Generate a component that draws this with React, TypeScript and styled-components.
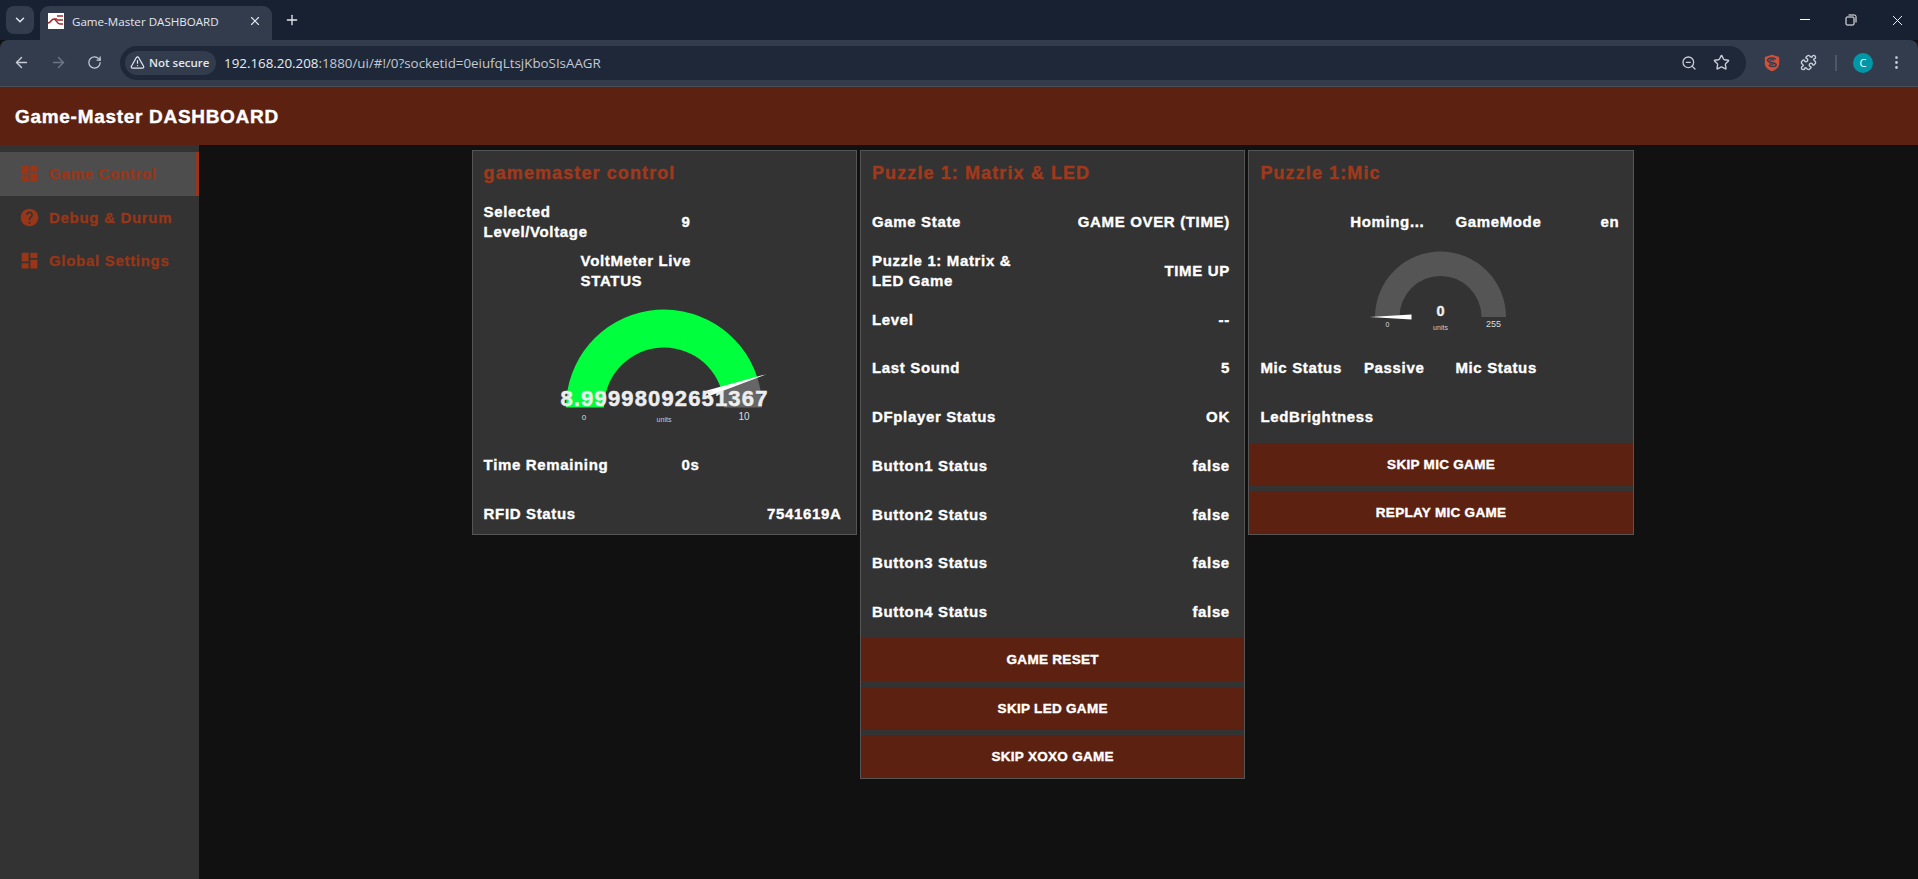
import React from 'react';
import styled, { createGlobalStyle } from 'styled-components';
import { ArrowLeft, ArrowRight, ChevronDown, EllipsisVertical, Plus, Puzzle, RotateCw, Star, TriangleAlert, X, ZoomOut } from 'lucide-react';

const GlobalStyle = createGlobalStyle`
  html, body {
    margin: 0;
    padding: 0;
    background: #111111;
    overflow: hidden;
  }
`;

const Page = styled.div`
  width: 1918px;
  height: 879px;
  display: flex;
  flex-direction: column;
  overflow: hidden;
  font-family: 'Liberation Sans', Arial, sans-serif;
`;

/* browser chrome */
const TabStrip = styled.div`
  height: 40px;
  flex: none;
  background: #182132;
  display: flex;
  align-items: flex-end;
  padding-left: 6px;
  color: #e3e7ee;
  font-family: 'Open Sans', 'Noto Sans', sans-serif;
`;

const TabSearch = styled.div`
  width: 28px;
  height: 28px;
  margin-bottom: 6px;
  border-radius: 8px;
  background: #323c4d;
  display: flex;
  align-items: center;
  justify-content: center;
`;

const Tab = styled.div`
  width: 232px;
  height: 34px;
  margin-left: 6px;
  padding: 0 10px 4px 8px;
  box-sizing: border-box;
  border-radius: 9px 9px 0 0;
  background: #323c4d;
  display: flex;
  align-items: center;
  font-size: 11.6px;
`;

const TabTitle = styled.span`
  margin-left: 8px;
  flex: 1;
  white-space: nowrap;
`;

const NewTab = styled.div`
  margin: 0 0 12px 12px;
  display: flex;
`;

const WindowControls = styled.div`
  margin-left: auto;
  align-self: stretch;
  display: flex;
  align-items: center;
  gap: 30px;
  padding-right: 12px;
`;

const Toolbar = styled.div`
  height: 47px;
  flex: none;
  box-sizing: border-box;
  background: #323c4d;
  border-radius: 8px 8px 0 0;
  border-bottom: 1px solid #4a4f57;
  display: flex;
  align-items: center;
  color: #c6ccd6;
  font-family: 'Open Sans', 'Noto Sans', sans-serif;
  padding-bottom: 1px;
`;

const NavButtons = styled.div`
  width: 120px;
  flex: none;
  padding-left: 13px;
  box-sizing: border-box;
  display: flex;
  gap: 20px;
`;

const Omnibox = styled.div`
  width: 1626px;
  height: 34px;
  border-radius: 17px;
  background: #1f2838;
  display: flex;
  align-items: center;
  padding: 0 16px 0 5px;
  box-sizing: border-box;
`;

const Chip = styled.div`
  width: 91px;
  height: 24px;
  flex: none;
  border-radius: 12px;
  background: #323c4d;
  display: flex;
  align-items: center;
  gap: 4px;
  padding-left: 5px;
  box-sizing: border-box;
  font-size: 11.5px;
  font-weight: 600;
  color: #e3e7ee;
  white-space: nowrap;
`;

const Url = styled.div`
  margin-left: 8px;
  font-size: 13.35px;
  color: #c3c9d3;
  white-space: nowrap;
  b {
    font-weight: 400;
    color: #e8ebf0;
  }
`;

const OmniIcons = styled.div`
  margin-left: auto;
  display: flex;
  align-items: center;
  gap: 16px;
`;

const ToolIcons = styled.div`
  flex: 1;
  display: flex;
  align-items: center;
  padding-left: 18px;
`;

const Separator = styled.div`
  width: 2px;
  height: 16px;
  margin: 0 16px 0 18px;
  background: #4d5665;
`;

const Avatar = styled.div`
  width: 20px;
  height: 20px;
  border-radius: 50%;
  background: #0097a7;
  color: #ffffff;
  font-size: 11px;
  display: flex;
  align-items: center;
  justify-content: center;
`;

/* dashboard */
const Header = styled.header`
  height: 58px;
  flex: none;
  background: #5c2110;
  color: #ffffff;
  display: flex;
  align-items: center;
  padding: 2px 0 0 15px;
  font-size: 19px;
  font-weight: 700;
  letter-spacing: 0.7px;
  -webkit-text-stroke: 0.4px #ffffff;
  box-sizing: border-box;
`;

const Body = styled.div`
  flex: 1;
  display: flex;
  min-height: 0;
`;

const Sidebar = styled.nav`
  width: 199px;
  flex: none;
  background: #333333;
  padding-top: 7px;
  box-sizing: border-box;
`;

const NavItem = styled.div<{ $active?: boolean }>`
  height: 43.5px;
  display: flex;
  align-items: center;
  box-sizing: border-box;
  padding-left: 19px;
  gap: 9px;
  color: #993618;
  background: ${p => (p.$active ? '#4d4d4d' : 'transparent')};
  border-right: ${p => (p.$active ? '3px solid #993618' : '0')};
  font-size: 15px;
  font-weight: 700;
  letter-spacing: 0.7px;
  -webkit-text-stroke: 0.3px #993618;
`;

const Main = styled.main`
  flex: 1;
  background: #111111;
  display: flex;
  align-items: flex-start;
  gap: 3px;
  padding: 5px 0 0 272.6px;
`;

const Card = styled.section`
  width: 385.4px;
  flex: none;
  box-sizing: border-box;
  background: #333333;
  border: 1px solid #555555;
  display: flex;
  flex-direction: column;
`;

const CardTitle = styled.h2`
  margin: 0;
  height: 51px;
  padding: 12px 0 0 11px;
  box-sizing: border-box;
  color: #a0391c;
  font-size: 18px;
  font-weight: 700;
  letter-spacing: 1.1px;
  -webkit-text-stroke: 0.4px #a0391c;
`;

const Rows = styled.div`
  display: flex;
  flex-direction: column;
  gap: 8.75px;
`;

const Row = styled.div<{ $split?: boolean }>`
  height: 40px;
  margin: 0 14.5px 0 11px;
  display: flex;
  align-items: center;
  justify-content: ${p => (p.$split ? 'flex-start' : 'space-between')};
  color: #ffffff;
  font-size: 15px;
  font-weight: 700;
  line-height: 20px;
  letter-spacing: 0.65px;
  -webkit-text-stroke: 0.35px #ffffff;
`;

const Label = styled.span<{ $width?: number }>`
  width: ${p => (p.$width ? `${p.$width}px` : 'auto')};
  flex: none;
`;

const HalfCell = styled.div<{ $offset?: number; $end?: boolean }>`
  width: 164px;
  flex: none;
  margin-left: ${p => p.$offset || 0}px;
  display: flex;
  justify-content: ${p => (p.$end ? 'flex-end' : 'space-between')};
`;

const GaugeCaption = styled.div`
  width: 150px;
  margin-left: 97px;
`;

const GaugeBox = styled.div<{ $height: number }>`
  height: ${p => p.$height}px;
  svg {
    display: block;
  }
`;

const Buttons = styled.div`
  display: flex;
  flex-direction: column;
  gap: 5.5px;
  margin-top: 6px;
`;

const ActionButton = styled.button`
  height: 43px;
  border: 0;
  padding: 0;
  background: #5c2110;
  color: #ffffff;
  font-family: 'Liberation Sans', Arial, sans-serif;
  font-size: 13.5px;
  font-weight: 700;
  letter-spacing: 0.3px;
  -webkit-text-stroke: 0.4px #ffffff;
`;

const DashboardIcon = () => (
  <svg width="21" height="21" viewBox="0 0 24 24" fill="#993618">
    <path d="M3 13h8V3H3v10zm0 8h8v-6H3v6zm10 0h8V11h-8v10zm0-18v6h8V3h-8z" />
  </svg>
);

const HelpIcon = () => (
  <svg width="21" height="21" viewBox="0 0 24 24" fill="#993618">
    <path d="M12 2C6.48 2 2 6.48 2 12s4.48 10 10 10 10-4.48 10-10S17.52 2 12 2zm1 17h-2v-2h2v2zm2.07-7.75l-.9.92C13.45 12.9 13 13.5 13 15h-2v-.5c0-1.1.45-2.1 1.17-2.83l1.24-1.26c.37-.36.59-.86.59-1.41 0-1.1-.9-2-2-2s-2 .9-2 2H8c0-2.21 1.79-4 4-4s4 1.79 4 4c0 .88-.36 1.68-.93 2.25z" />
  </svg>
);

const Favicon = () => (
  <svg width="16" height="16" viewBox="0 0 16 16">
    <rect width="16" height="16" fill="#ffffff" />
    <path d="M0 10c3 0 3-4 6-4h3M6 6c2 0 3 5 6 5M9 3h6M12 11h3M9 7h6" stroke="#a8272b" strokeWidth="1.6" fill="none" />
  </svg>
);

const ShieldIcon = () => (
  <svg width="16" height="18" viewBox="0 0 16 18" fill="none">
    <path d="M8 .8 15.2 3v6.2c0 4-3.4 6.6-7.2 8-3.8-1.4-7.2-4-7.2-8V3z" fill="#d0513a" />
    <path d="M11.8 5.2C9.8 3.4 4 3.4 3.6 6.4c-.3 2.6 8.4 1.6 8.6 4.4.1 2-4.6 2.6-7.4.4" stroke="#323c4d" strokeWidth="1.5" />
    <path d="M5.6 6.6c1.4-1 3.4-1 4.6-.2M5.4 9.6c1.6.7 3.4.7 4.6.1" stroke="#323c4d" strokeWidth="1.2" />
  </svg>
);

const MinimizeIcon = () => (
  <svg width="16" height="16" viewBox="0 0 16 16">
    <path d="M3 7.5h10" stroke="#ffffff" strokeWidth="1" />
  </svg>
);

const RestoreIcon = () => (
  <svg width="16" height="16" viewBox="0 0 16 16" fill="none" stroke="#ffffff">
    <rect x="3" y="5" width="8" height="8" rx="1" />
    <path d="M5.5 3h6a1.5 1.5 0 0 1 1.5 1.5v6" />
  </svg>
);

// half-donut gauge drawn the way node-red dashboard does it
const arcPath = (cx: number, cy: number, outer: number, inner: number, from: number, to: number) => {
  const pt = (r: number, a: number) => {
    const rad = Math.PI - (a * Math.PI) / 180;
    return `${(cx + r * Math.cos(rad)).toFixed(2)} ${(cy - r * Math.sin(rad)).toFixed(2)}`;
  };
  return `M${pt(outer, from)} A${outer} ${outer} 0 0 1 ${pt(outer, to)} L${pt(inner, to)} A${inner} ${inner} 0 0 0 ${pt(inner, from)} Z`;
};

const needlePath = (cx: number, cy: number, length: number, start: number, base: number, angle: number) => {
  const rad = Math.PI - (angle * Math.PI) / 180;
  const dx = Math.cos(rad);
  const dy = -Math.sin(rad);
  const nx = -dy;
  const ny = dx;
  const sx = cx + start * dx;
  const sy = cy + start * dy;
  return `M${sx + nx * base} ${sy + ny * base} L${cx + length * dx} ${cy + length * dy} L${sx - nx * base} ${sy - ny * base} Z`;
};

const gaugeFont = "'Liberation Sans', Arial, sans-serif";

const VoltGauge = () => (
  <svg width="384" height="137" viewBox="0 0 384 137">
    <path d={arcPath(191, 107.5, 98, 60, 0, 162)} fill="#00ff3c" />
    <path d={arcPath(191, 107.5, 98, 60, 162, 180)} fill="#666666" />
    <path d={needlePath(191, 107.5, 108, 46, 3, 162)} fill="#ffffff" />
    <text x="191.5" y="106" textAnchor="middle" fontFamily={gaugeFont} fontSize="22" fontWeight="700" fill="#eeeeee" stroke="#eeeeee" strokeWidth="0.5" letterSpacing="1.15">
      8.99998092651367
    </text>
    <text x="111" y="120" textAnchor="middle" fontFamily={gaugeFont} fontSize="8" fill="#dddddd">0</text>
    <text x="191" y="122" textAnchor="middle" fontFamily={gaugeFont} fontSize="7" fill="#cccccc">units</text>
    <text x="271" y="120" textAnchor="middle" fontFamily={gaugeFont} fontSize="10" fill="#dddddd">10</text>
  </svg>
);

const MicGauge = () => (
  <svg width="384" height="88.5" viewBox="0 0 384 88.5">
    <path d={arcPath(191.5, 66, 65.5, 41, 0, 180)} fill="#555555" />
    <path d={needlePath(191.5, 66, 71, 29, 2.5, 0)} fill="#ffffff" />
    <text x="191.5" y="64.5" textAnchor="middle" fontFamily={gaugeFont} fontSize="14.5" fontWeight="700" fill="#eeeeee" stroke="#eeeeee" strokeWidth="0.4">0</text>
    <text x="138.5" y="76" textAnchor="middle" fontFamily={gaugeFont} fontSize="7" fill="#dddddd">0</text>
    <text x="191.5" y="79" textAnchor="middle" fontFamily={gaugeFont} fontSize="7" fill="#cccccc">units</text>
    <text x="244.5" y="76" textAnchor="middle" fontFamily={gaugeFont} fontSize="9" fill="#dddddd">255</text>
  </svg>
);

const puzzleRows: [string, string][] = [
  ['Game State', 'GAME OVER (TIME)'],
  ['Puzzle 1: Matrix & LED Game', 'TIME UP'],
  ['Level', '--'],
  ['Last Sound', '5'],
  ['DFplayer Status', 'OK'],
  ['Button1 Status', 'false'],
  ['Button2 Status', 'false'],
  ['Button3 Status', 'false'],
  ['Button4 Status', 'false'],
];

const App: React.FC = () => {
  return (
    <Page>
      <GlobalStyle />
      <TabStrip>
        <TabSearch>
          <ChevronDown size={14} strokeWidth={2.5} />
        </TabSearch>
        <Tab>
          <Favicon />
          <TabTitle>Game-Master DASHBOARD</TabTitle>
          <X size={14} strokeWidth={2} />
        </Tab>
        <NewTab>
          <Plus size={16} strokeWidth={2} />
        </NewTab>
        <WindowControls>
          <MinimizeIcon />
          <RestoreIcon />
          <X size={17} strokeWidth={1.3} color="#ffffff" />
        </WindowControls>
      </TabStrip>

      <Toolbar>
        <NavButtons>
          <ArrowLeft size={17} />
          <ArrowRight size={17} color="#6d7686" />
          <RotateCw size={15} style={{ marginTop: 1 }} />
        </NavButtons>
        <Omnibox>
          <Chip>
            <TriangleAlert size={15} />
            Not secure
          </Chip>
          <Url>
            <b>192.168.20.208</b>:1880/ui/#!/0?socketid=0eiufqLtsjKboSIsAAGR
          </Url>
          <OmniIcons>
            <ZoomOut size={16} />
            <Star size={17} />
          </OmniIcons>
        </Omnibox>
        <ToolIcons>
          <ShieldIcon />
          <Puzzle size={17} style={{ marginLeft: 20 }} />
          <Separator />
          <Avatar>C</Avatar>
          <EllipsisVertical size={17} style={{ marginLeft: 15 }} />
        </ToolIcons>
      </Toolbar>

      <Header>Game-Master DASHBOARD</Header>

      <Body>
        <Sidebar>
          <NavItem $active>
            <DashboardIcon />
            Game Control
          </NavItem>
          <NavItem>
            <HelpIcon />
            Debug &amp; Durum
          </NavItem>
          <NavItem>
            <DashboardIcon />
            Global Settings
          </NavItem>
        </Sidebar>

        <Main>
          <Card>
            <CardTitle>gamemaster control</CardTitle>
            <Rows>
              <Row $split>
                <Label $width={164}>Selected Level/Voltage</Label>
                <HalfCell $offset={34}>9</HalfCell>
              </Row>
              <Row $split>
                <GaugeCaption>VoltMeter Live STATUS</GaugeCaption>
              </Row>
              <GaugeBox $height={137}>
                <VoltGauge />
              </GaugeBox>
              <Row $split>
                <Label $width={164}>Time Remaining</Label>
                <HalfCell $offset={34}>0s</HalfCell>
              </Row>
              <Row>
                <Label>RFID Status</Label>
                <span>7541619A</span>
              </Row>
            </Rows>
          </Card>

          <Card>
            <CardTitle>Puzzle 1: Matrix &amp; LED</CardTitle>
            <Rows>
              {puzzleRows.map(([name, value]) => (
                <Row key={name}>
                  <Label $width={name.length > 20 ? 164 : undefined}>{name}</Label>
                  <span>{value}</span>
                </Row>
              ))}
            </Rows>
            <Buttons>
              <ActionButton>GAME RESET</ActionButton>
              <ActionButton>SKIP LED GAME</ActionButton>
              <ActionButton>SKIP XOXO GAME</ActionButton>
            </Buttons>
          </Card>

          <Card>
            <CardTitle>Puzzle 1:Mic</CardTitle>
            <Rows>
              <Row $split>
                <HalfCell $end>Homing...</HalfCell>
                <HalfCell $offset={31}>
                  <span>GameMode</span>
                  <span>en</span>
                </HalfCell>
              </Row>
              <GaugeBox $height={88.5}>
                <MicGauge />
              </GaugeBox>
              <Row $split>
                <HalfCell>
                  <span>Mic Status</span>
                  <span>Passive</span>
                </HalfCell>
                <HalfCell $offset={31}>Mic Status</HalfCell>
              </Row>
              <Row>
                <Label>LedBrightness</Label>
              </Row>
            </Rows>
            <Buttons>
              <ActionButton>SKIP MIC GAME</ActionButton>
              <ActionButton>REPLAY MIC GAME</ActionButton>
            </Buttons>
          </Card>
        </Main>
      </Body>
    </Page>
  );
};

export default App;
